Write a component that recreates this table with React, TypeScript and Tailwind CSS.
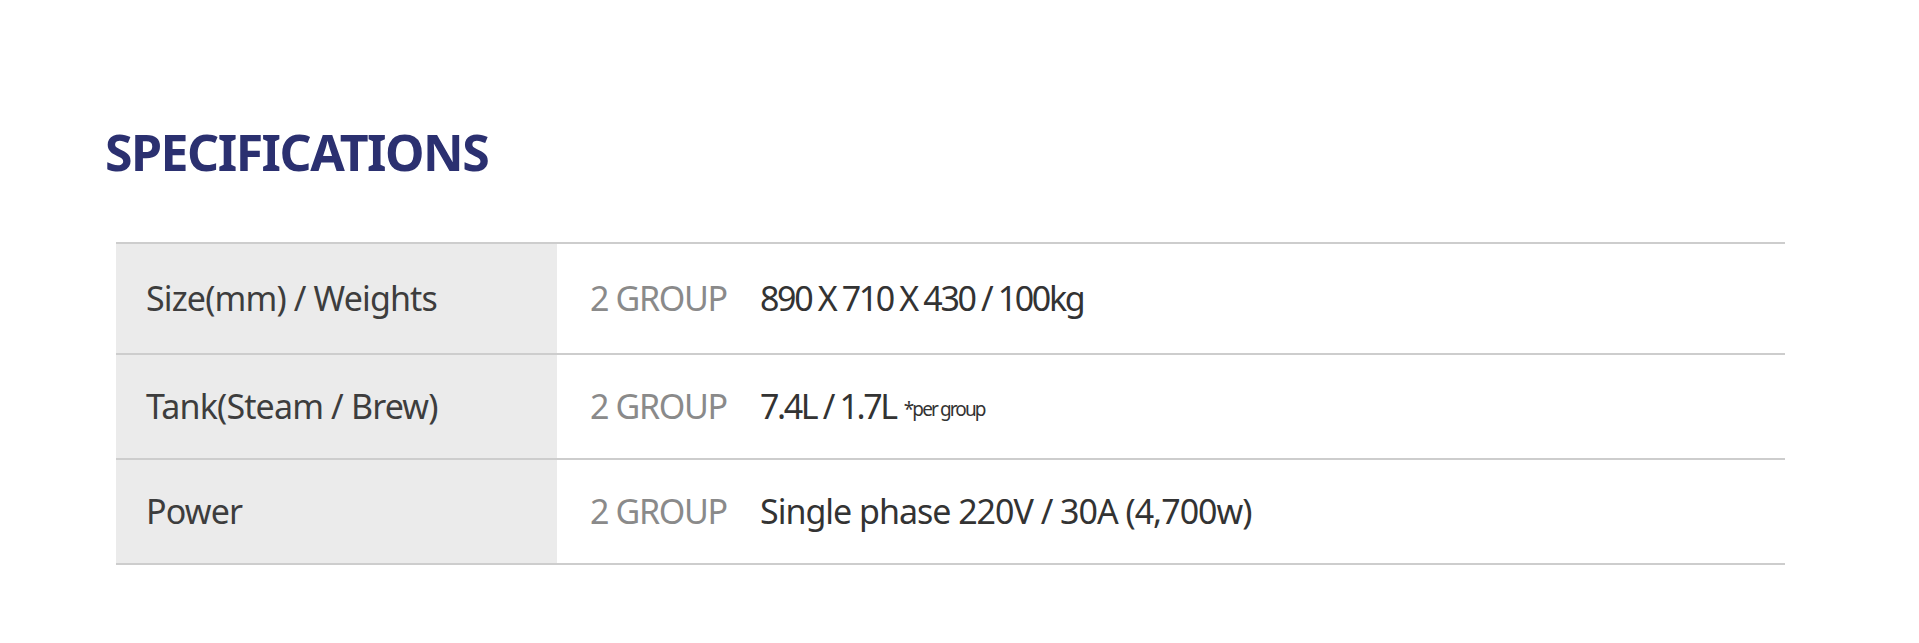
const rows = [
  {
    label: "Size(mm) / Weights",
    value: "890 X 710 X 430 / 100kg",
    note: "",
    h: "h-[111px]",
    track: "tracking-[-0.07em]",
  },
  {
    label: "Tank(Steam / Brew)",
    value: "7.4L / 1.7L",
    note: "*per group",
    h: "h-[105px]",
    track: "tracking-[-0.07em]",
  },
  {
    label: "Power",
    value: "Single phase 220V / 30A (4,700w)",
    note: "",
    h: "h-[105px]",
    track: "tracking-[-0.03em]",
  },
];

const SpecTable = () => {
  return (
    <div className="ml-[116px] w-[1669px] border-t-2 border-[#cdcdcd]">
      {rows.map((row) => (
        <div
          key={row.label}
          className={`flex ${row.h} border-b-2 border-[#cdcdcd]`}
        >
          <div className="flex w-[441px] items-center bg-[#ebebeb] pl-[30px] text-[34px] tracking-[-0.025em] text-[#3d3d3d]">
            {row.label}
          </div>
          <div className="flex flex-1 items-center pl-[33px] text-[34px]">
            <span className="w-[170px] tracking-[-0.04em] text-[#8a8a8a]">
              2 GROUP
            </span>
            <span className={`${row.track} text-[#333333]`}>{row.value}</span>
            {row.note && (
              <span className="ml-[8px] mt-[6px] text-[19px] tracking-[-0.1em] text-[#333333]">
                {row.note}
              </span>
            )}
          </div>
        </div>
      ))}
    </div>
  );
};

export default function App() {
  return (
    <div
      className="h-[643px] w-full bg-white pt-[120px]"
      style={{ fontFamily: '"Noto Sans", sans-serif' }}
    >
      <h2 className="mb-[58px] pl-[105px] text-[50px] font-bold leading-[64px] tracking-[-0.03em] text-[#2b3070]">
        SPECIFICATIONS
      </h2>
      <SpecTable />
    </div>
  );
}
